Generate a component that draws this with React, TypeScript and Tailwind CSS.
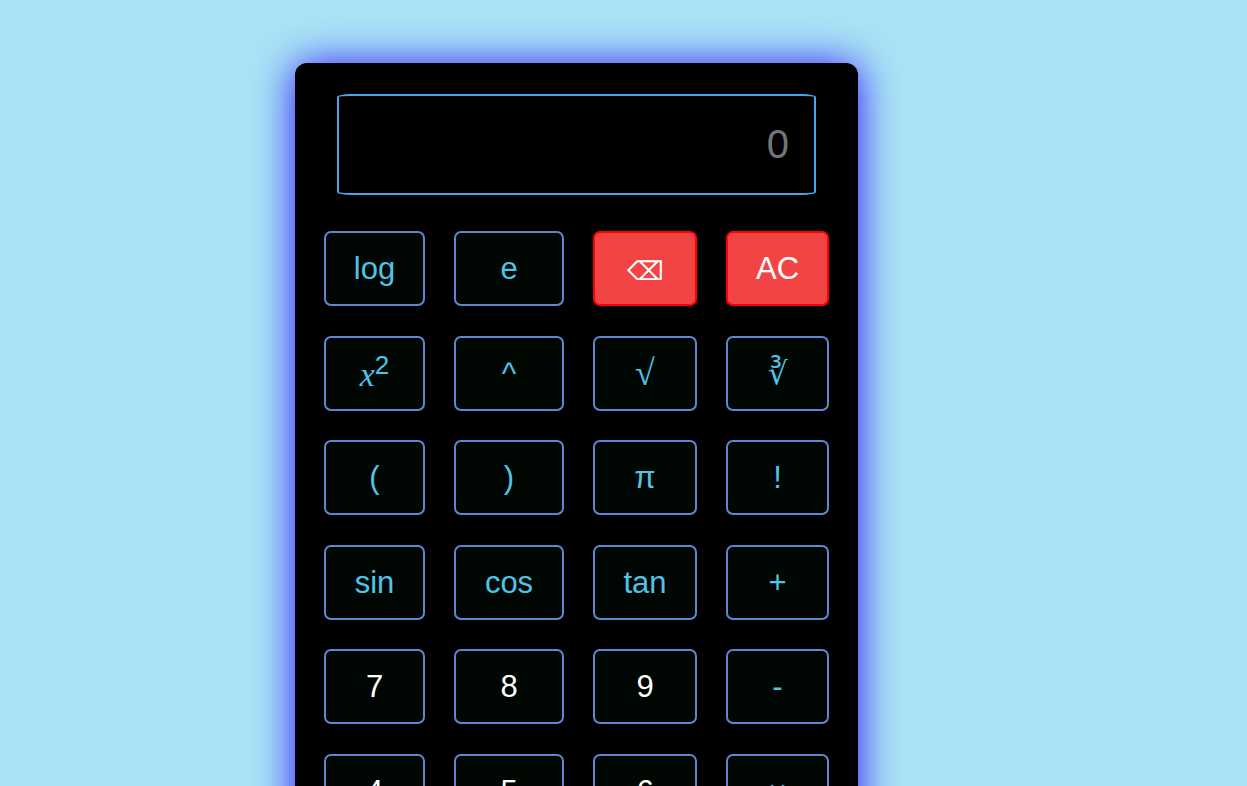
import { useState } from "react";
import type { ReactNode } from "react";

type Tone = "function" | "digit" | "danger";

interface Key {
  id: string;
  label: ReactNode;
  name?: string;
  tone?: Tone;
}

const sections: Key[][] = [
  [
    { id: "log", label: "log" },
    { id: "e", label: "e" },
    {
      id: "back",
      label: <span className="block pt-1 text-[26px]">⌫</span>,
      name: "Backspace",
      tone: "danger",
    },
    { id: "clear", label: "AC", name: "All clear", tone: "danger" },
    {
      id: "square",
      label: (
        <span className="block pt-1">
          <i className="font-['Liberation_Serif',serif] text-[34px]">x</i>
          <sup className="-top-3 text-[26px]">2</sup>
        </span>
      ),
      name: "Square",
    },
    { id: "^", label: "^" },
    { id: "√", label: <span className="font-['Liberation_Serif',serif] text-[36px]">√</span> },
    { id: "∛", label: "∛" },
  ],
  [
    { id: "(", label: "(" },
    { id: ")", label: ")" },
    { id: "π", label: "π" },
    { id: "!", label: "!" },
    { id: "sin", label: "sin" },
    { id: "cos", label: "cos" },
    { id: "tan", label: "tan" },
    { id: "+", label: "+" },
  ],
  [
    { id: "7", label: "7", tone: "digit" },
    { id: "8", label: "8", tone: "digit" },
    { id: "9", label: "9", tone: "digit" },
    { id: "-", label: "-" },
    { id: "4", label: "4", tone: "digit" },
    { id: "5", label: "5", tone: "digit" },
    { id: "6", label: "6", tone: "digit" },
    { id: "×", label: "×" },
  ],
];

const tones: Record<Tone, string> = {
  function: "border-[#5f86d2] bg-[#000702] text-[#4fc3e8]",
  digit: "border-[#5f86d2] bg-[#000702] text-white",
  danger: "border-[#ff0000] bg-[#f24444] text-white",
};

function KeyButton({ item, onPress }: { item: Key; onPress: (id: string) => void }) {
  return (
    <button
      type="button"
      aria-label={item.name}
      onClick={() => onPress(item.id)}
      className={`h-[75px] rounded-[7px] border-2 text-center text-[31px] leading-9 ${tones[item.tone ?? "function"]}`}
    >
      {item.label}
    </button>
  );
}

export default function App() {
  const [value, setValue] = useState("");

  const press = (id: string) => {
    if (id === "clear") setValue("");
    else if (id === "back") setValue((v) => v.slice(0, -1));
    else if (id === "square") setValue((v) => v + "^2");
    else setValue((v) => v + id);
  };

  return (
    <main className="flow-root min-h-screen bg-[#a9e3f5] font-['Liberation_Sans',Arial,sans-serif]">
      <div className="mt-[63px] ml-[295px] w-[563px] rounded-xl bg-black px-[29px] pt-[31px] pb-[30px] shadow-[0_2px_40px_#2b0bff]">
        <div className="px-[13px]">
          <input
            type="text"
            aria-label="Display"
            placeholder="0"
            value={value}
            onChange={(event) => setValue(event.target.value)}
            className="block h-[101px] w-full rounded-[3%] border-2 border-[#48a6e8] bg-black px-[25px] text-right text-[40px] text-white outline-none placeholder:text-[#757575]"
          />
        </div>
        <div className="mt-9 flex flex-col gap-[29px]">
          {sections.map((keys) => (
            <div
              key={keys[0].id}
              className="grid grid-cols-[101px_110px_104px_103px] gap-x-[29px] gap-y-[30px]"
            >
              {keys.map((item) => (
                <KeyButton key={item.id} item={item} onPress={press} />
              ))}
            </div>
          ))}
        </div>
      </div>
    </main>
  );
}
